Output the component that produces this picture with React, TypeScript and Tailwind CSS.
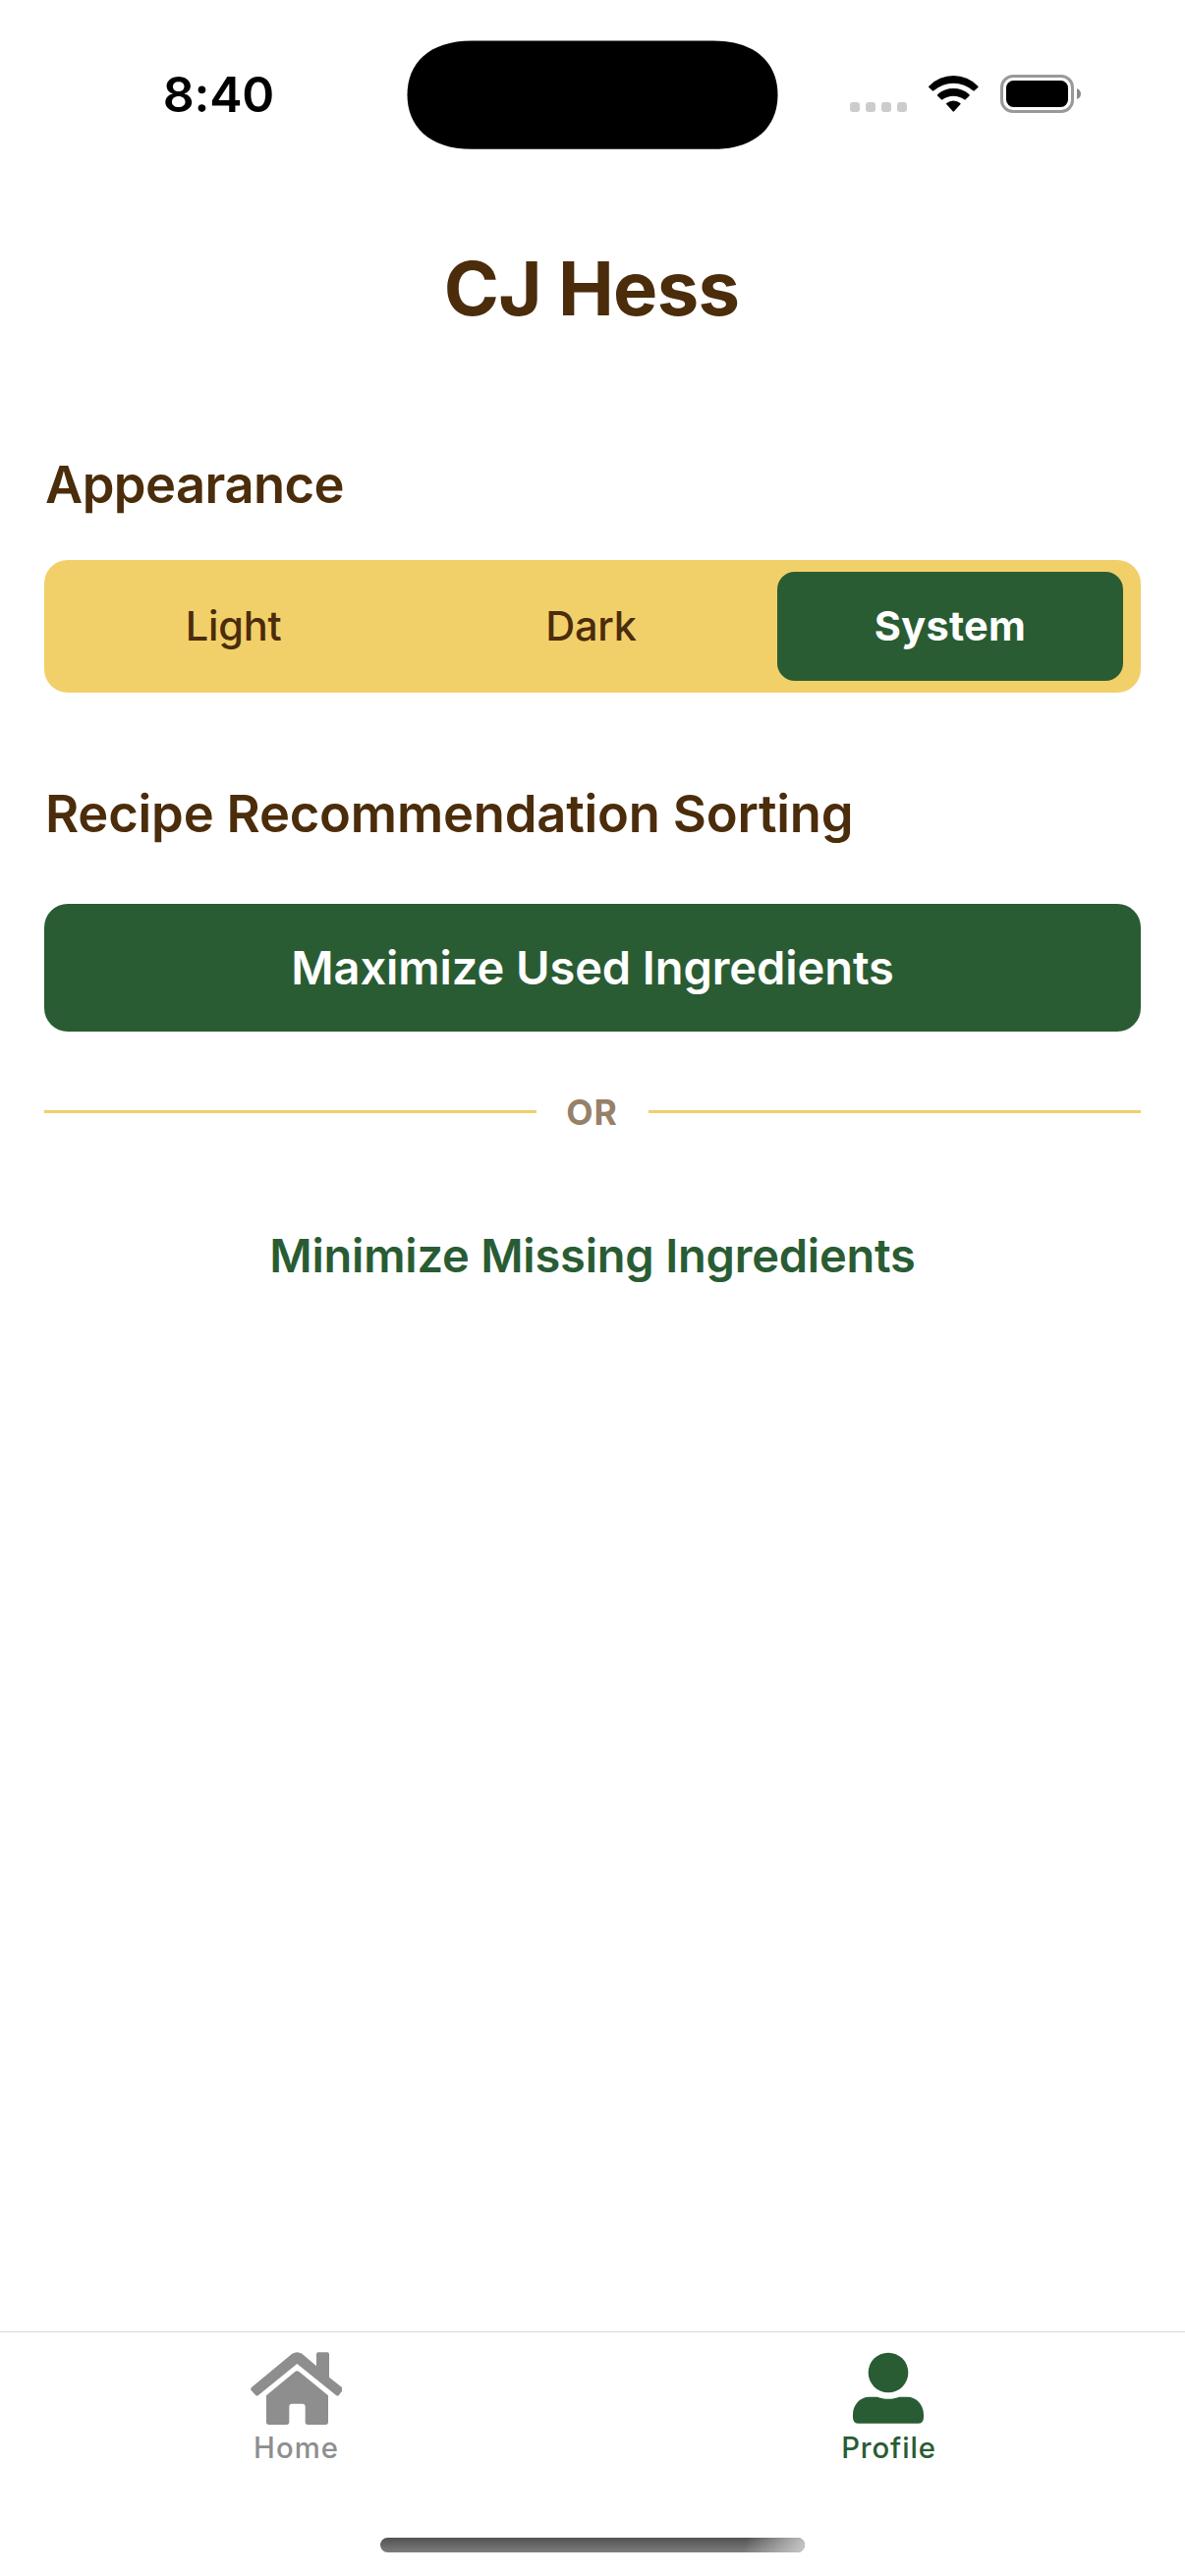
import React from "react";

const themes = ["Light", "Dark", "System"];

function WifiIcon() {
  return (
    <svg className="h-[37px] w-[51px]" viewBox="0 0 153 111" fill="#000">
      <path d="M1 32A104 104 0 0 1 151 32Q153 34 151 36L140 46Q138 48 136 46A90 90 0 0 0 16 46Q14 48 12 46L1 36Q-1 34 1 32Z" />
      <path d="M28 57A74 74 0 0 1 124 57Q127 60 124 62L113 73Q111 75 109 73A57 57 0 0 0 43 73Q41 75 39 73L28 62Q25 60 28 57Z" />
      <path d="M55 84A32 32 0 0 1 97 84Q99 86 97 88L78 109Q76 111 74 109L55 88Q53 86 55 84Z" />
    </svg>
  );
}

function BatteryIcon() {
  return (
    <svg className="h-[39px] w-[82px]" viewBox="0 0 82 39">
      <rect x="1.5" y="1.5" width="72" height="36" rx="11.5" fill="none" stroke="#999" strokeWidth="3" />
      <rect x="6" y="6" width="63" height="27" rx="7.5" fill="#000" />
      <path d="M78 14Q82 15.500 82 19.500Q82 23.500 78 25Z" fill="#8a8a8a" />
    </svg>
  );
}

function HomeIcon() {
  return (
    <svg className="h-[74px] w-[93px]" viewBox="0 0 279 222" fill="#8e8e8e">
      <path d="M127 5Q142 -4 157 5L201 43V7Q201 1 207 1H234Q240 1 240 7V77L279 108V119L270 131Q266 136 261 132L142 36L24 132Q19 136 15 131L2 117Q-1 112 3 108Z" />
      <path d="M136 60Q142 56 148 60L237 133V214Q237 222 229 222H175Q167 222 167 214V167Q167 158 158 158H126Q118 158 118 167V214Q118 222 110 222H56Q48 222 48 214V133Z" />
    </svg>
  );
}

function ProfileIcon() {
  return (
    <svg className="mr-px h-[73px] w-[72px]" viewBox="0 0 216 219" fill="#295c33">
      <circle cx="108" cy="63" r="61" />
      <path d="M50 137H72C80 137 84 143 108 143C132 143 136 137 144 137H166C194 137 216 161 216 191V200Q216 218 198 218H18Q0 218 0 200V191C0 161 22 137 50 137Z" />
    </svg>
  );
}

export default function App() {
  return (
    <div className="flex h-[2622px] w-[1206px] flex-col overflow-hidden bg-white font-['Inter',sans-serif] text-[#4b2c0b]">
      <header className="flex h-[152px] shrink-0 items-center pt-[41px] text-black">
        <div className="w-[414px] pr-[135px] pb-[2px] text-right text-[50px] leading-[60px] font-semibold tracking-[-0.25px]">
          8:40
        </div>
        <svg className="h-[111px] w-[378px]" viewBox="0 0 378 111">
          <path d="M0.500 55.500C0.500 24 22 0.500 66 0.500H312C356 0.500 377.500 24 377.500 55.500C377.500 87 356 110.800 312 110.800H66C22 110.800 0.500 87 0.500 55.500Z" />
        </svg>
        <div className="mb-[2px] flex h-[39px] flex-1 items-start pl-[73px]">
          <div className="mt-[28px] flex gap-[6px]">
            {[0, 1, 2, 3].map((n) => (
              <span key={n} className="size-[10px] rounded-[3px] bg-[#ccc]" />
            ))}
          </div>
          <div className="mt-px ml-[22px]">
            <WifiIcon />
          </div>
          <div className="ml-[22px]">
            <BatteryIcon />
          </div>
        </div>
      </header>

      <main className="flex flex-1 flex-col px-[45px]">
        <h1 className="mt-[95px] pr-[2px] text-center text-[76px] leading-[93px] font-bold tracking-[-0.75px]">CJ Hess</h1>

        <h2 className="mt-[121px] pl-px text-[52.5px] leading-[64px] font-semibold tracking-[-0.56px]">Appearance</h2>
        <div className="mt-[45px] flex h-[135px] rounded-[24px] bg-[#f1d06a] p-[12px]">
          {themes.map((name) => (
            <button
              key={name}
              className={
                name === "System"
                  ? "mx-[6px] w-[352px] rounded-[18px] bg-[#295c33] text-[41.5px] font-bold tracking-[0.3px] text-white"
                  : "mx-[6px] w-[352px] rounded-[18px] pr-[3px] text-[41.5px] font-medium tracking-[-0.2px]"
              }
            >
              {name}
            </button>
          ))}
        </div>

        <h2 className="mt-[91px] pl-px text-[52.5px] leading-[64px] font-semibold tracking-[-0.21px]">
          Recipe Recommendation Sorting
        </h2>
        <button className="mt-[60px] h-[130px] rounded-[24px] bg-[#295c33] text-[47px] font-semibold tracking-[-0.08px] text-white">
          Maximize Used Ingredients
        </button>
        <div className="mt-[60px] flex h-[43px] items-center">
          <div className="h-[3px] flex-1 bg-[#f1d06a]" />
          <div className="w-[114px] pt-[2px] pr-px text-center text-[35.5px] leading-[43px] font-bold tracking-[0.8px] text-[#978069]">
            OR
          </div>
          <div className="h-[3px] flex-1 bg-[#f1d06a]" />
        </div>
        <button className="mt-[60px] h-[130px] text-[47px] font-semibold tracking-[-0.2px] text-[#295c33]">
          Minimize Missing Ingredients
        </button>
      </main>

      <nav className="flex h-[249px] shrink-0 flex-col border-t border-[#d8d8d8]">
        <div className="flex h-[209px] text-[29.3px] leading-[36px] font-medium">
          <div className="flex flex-1 flex-col items-center pt-[20px] text-[#8e8e8e]">
            <HomeIcon />
            <span className="mt-[6px] tracking-[1.05px]">Home</span>
          </div>
          <div className="flex flex-1 flex-col items-center pt-[20px] text-[#295c33]">
            <ProfileIcon />
            <span className="mt-[7px] tracking-[0.9px]">Profile</span>
          </div>
        </div>
        <div className="flex h-[15px] w-[432px] self-center overflow-hidden rounded-full bg-linear-to-b from-[#525252] to-[#7d7d7d]">
          <div className="ml-auto w-[70px] bg-[linear-gradient(110deg,transparent_15%,#c8c8c8_100%)]" />
        </div>
      </nav>
    </div>
  );
}
